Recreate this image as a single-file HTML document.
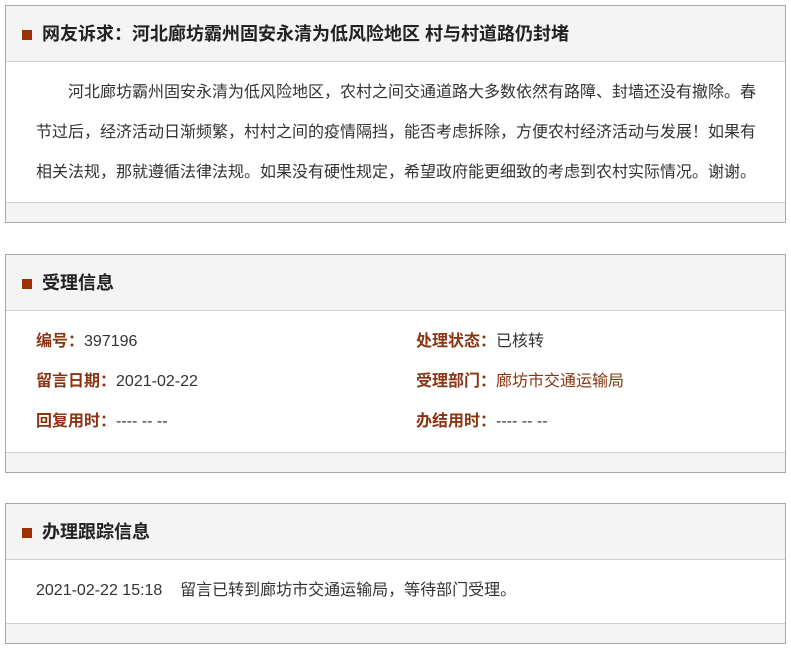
<!DOCTYPE html>
<html><head><meta charset="utf-8"><style>
body{margin:0;background:#fff;font-family:"Liberation Sans","Noto Sans CJK SC",sans-serif;color:#333;}
.box{position:absolute;left:5px;width:779px;border:1px solid #a8a8a8;background:#fff;}
.hd{height:55px;background:#f4f4f4;border-bottom:1px solid #d0d0d0;position:relative;}
.hd i{position:absolute;left:16px;top:24px;width:10px;height:10px;background:#9b3300;}
.hd b{position:absolute;left:36px;top:0;line-height:56px;font-size:18px;color:#222;}
.ft{height:19px;background:#f4f4f4;border-top:1px solid #d0d0d0;}
.p{box-sizing:border-box;height:140px;padding:11px 26px 0 30px;font-size:16px;line-height:40px;text-indent:32px;color:#333;overflow:hidden;}
.row{position:absolute;font-size:16px;line-height:20px;}
.l{color:#8b3412;font-weight:bold;}
</style></head><body>
<div class="box" style="top:5px;height:216px">
<div class="hd"><i></i><b>网友诉求：河北廊坊霸州固安永清为低风险地区 村与村道路仍封堵</b></div>
<div class="p">河北廊坊霸州固安永清为低风险地区，农村之间交通道路大多数依然有路障、封墙还没有撤除。春节过后，经济活动日渐频繁，村村之间的疫情隔挡，能否考虑拆除，方便农村经济活动与发展！如果有相关法规，那就遵循法律法规。如果没有硬性规定，希望政府能更细致的考虑到农村实际情况。谢谢。</div>
<div class="ft"></div>
</div>
<div class="box" style="top:254px;height:217px">
<div class="hd"><i></i><b>受理信息</b></div>
<div class="row" style="left:30px;top:77px"><span class="l">编号：</span>397196</div>
<div class="row" style="left:30px;top:117px"><span class="l">留言日期：</span>2021-02-22</div>
<div class="row" style="left:30px;top:157px"><span class="l">回复用时：</span>---- -- --</div>
<div class="row" style="left:410px;top:77px"><span class="l">处理状态：</span>已核转</div>
<div class="row" style="left:410px;top:117px"><span class="l">受理部门：</span><span style="color:#8b3412">廊坊市交通运输局</span></div>
<div class="row" style="left:410px;top:157px"><span class="l">办结用时：</span>---- -- --</div>
<div class="ft" style="position:absolute;left:0;right:0;bottom:0"></div>
</div>
<div class="box" style="top:503px;height:139px">
<div class="hd"><i></i><b>办理跟踪信息</b></div>
<div class="row" style="left:30px;top:77px">2021-02-22 15:18&nbsp;&nbsp;&nbsp;&nbsp;留言已转到廊坊市交通运输局，等待部门受理。</div>
<div class="ft" style="position:absolute;left:0;right:0;bottom:0"></div>
</div>
</body></html>
